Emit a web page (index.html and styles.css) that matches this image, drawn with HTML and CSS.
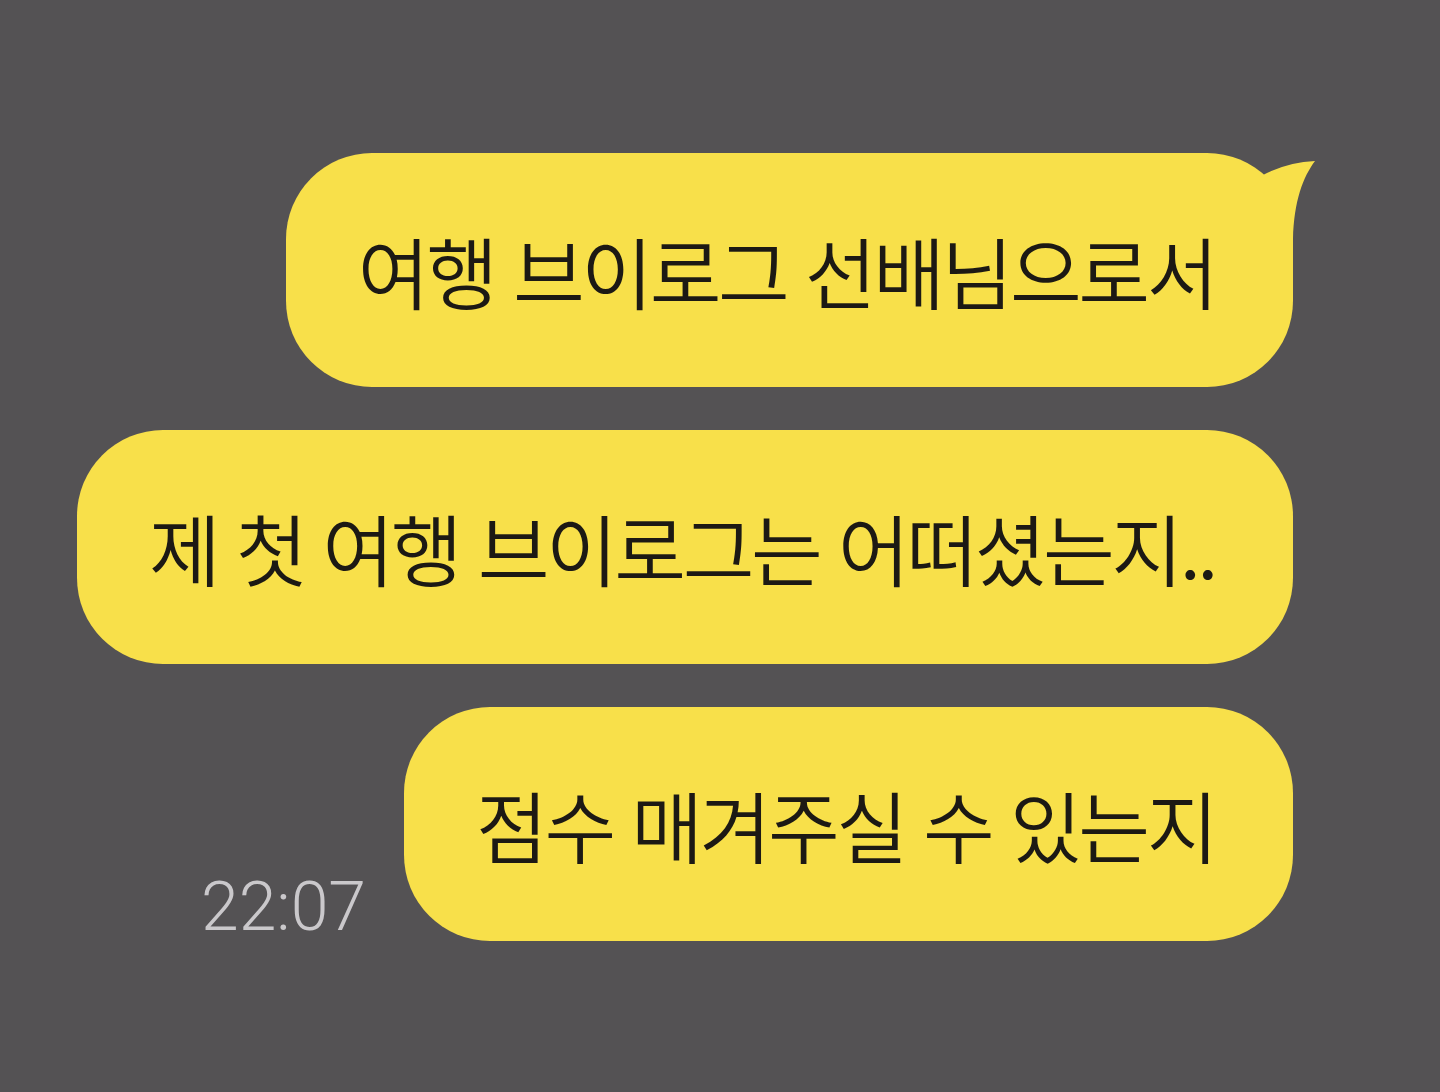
FILE: index.html
```html
<!DOCTYPE html>
<html lang="ko">

<head>
    <meta charset="UTF-8">
    <meta name="viewport" content="width=device-width, initial-scale=1.0">
    <title>채팅</title>
    <link rel="stylesheet" href="styles.css">
</head>

<body>
    <div class="chat">
        <!-- 첫 말풍선 (꼬리 있음) -->
        <div class="row">
            <div class="bubble">
                여행 브이로그 선배님으로서
                <svg class="tail" width="90" height="100" viewBox="0 0 90 100">
                    <path d="M26,32 L33,22 Q58,9 85,8 C73,24 64,48 63,86 L63,100 L10,100 L10,40 Z" fill="#f8e04a" />
                </svg>
            </div>
        </div>
        <div class="row">
            <div class="bubble">제 첫 여행 브이로그는 어떠셨는지..</div>
        </div>
        <div class="row">
            <span class="time">22:07</span>
            <div class="bubble">점수 매겨주실 수 있는지</div>
        </div>
    </div>
</body>

</html>
```

FILE: styles.css
```css
/* styles.css */
body {
    margin: 0;
    background-color: #545254;
    font-family: "Noto Sans CJK KR", "Noto Sans", sans-serif;
}

.chat {
    display: flex;
    flex-direction: column;
    align-items: flex-end;
    gap: 43px;
    padding: 153px 147px 0 0;
}

.row {
    display: flex;
    align-items: flex-end;
    gap: 38px;
}

.bubble {
    position: relative;
    background-color: #f8e04a;
    color: #1c1914;
    font-size: 78px;
    font-weight: 350;
    line-height: 98px;
    letter-spacing: -3.4px;
    padding: 68px 78px 68px 72px;
    border-radius: 86px;
    white-space: nowrap;
}

.tail {
    position: absolute;
    top: 0;
    right: -27px;
}

.time {
    font-family: Roboto, "Liberation Sans", sans-serif;
    font-weight: 300;
    font-size: 68px;
    line-height: 1;
    color: #cac8cb;
}
```
